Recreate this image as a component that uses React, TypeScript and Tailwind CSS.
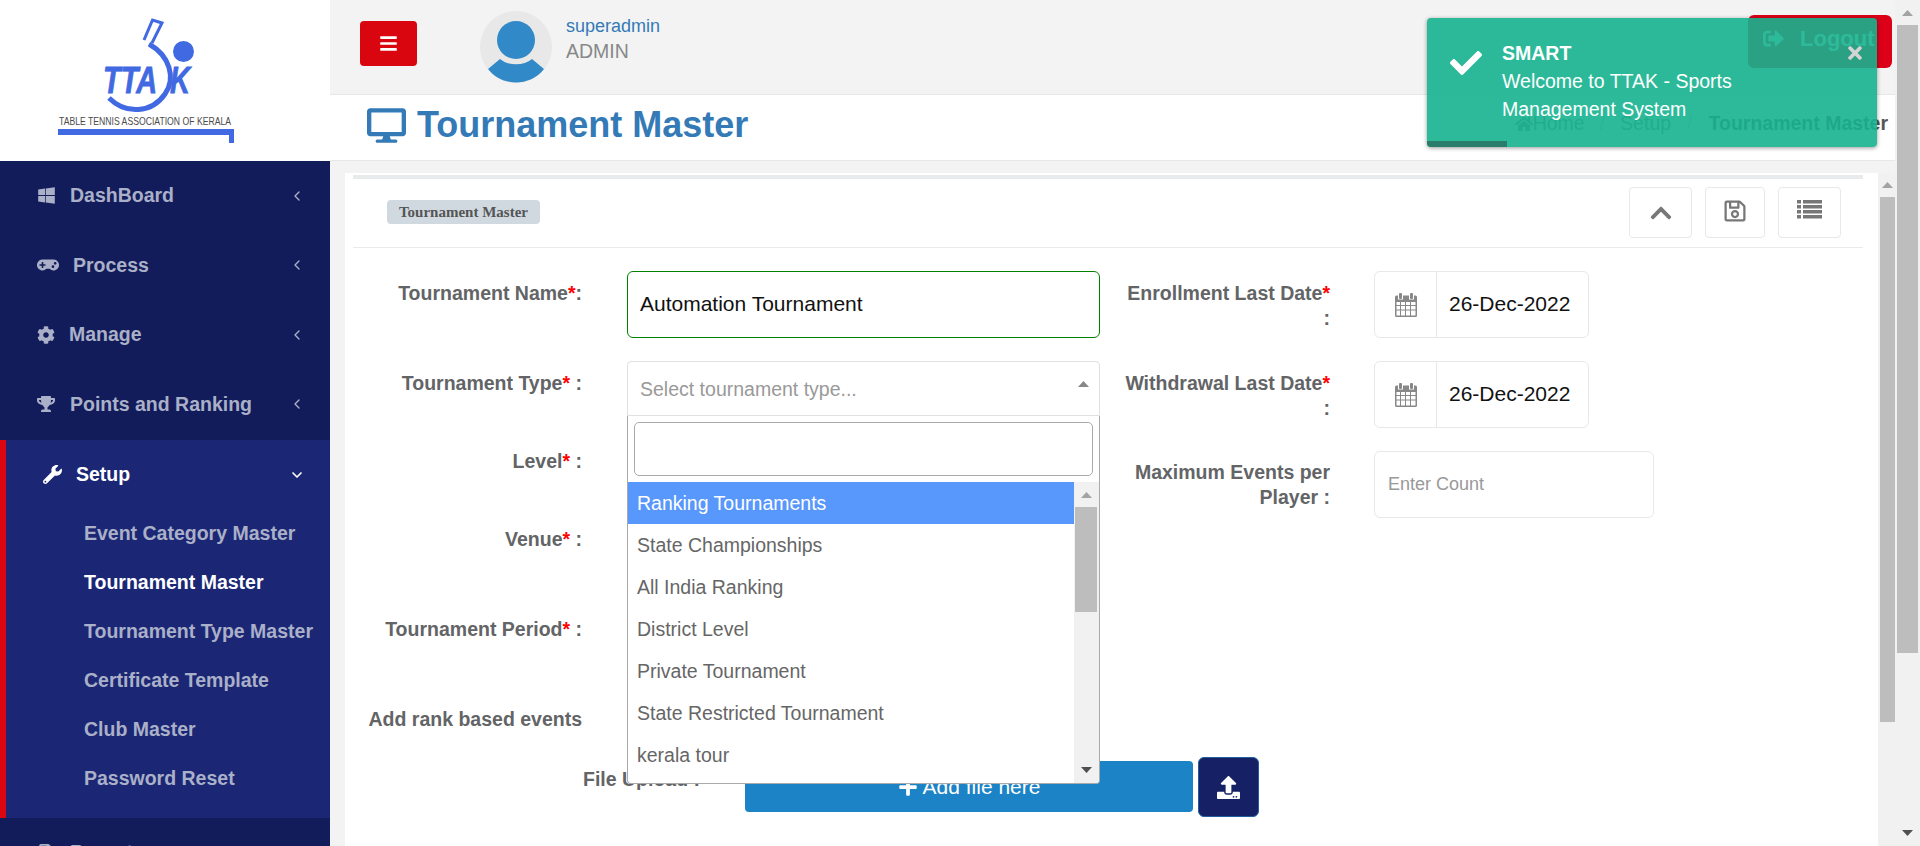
import React from "react";
import { ChevronDown, ChevronLeft } from "lucide-react";
import {
  FaBars,
  FaCheck,
  FaChevronUp,
  FaCog,
  FaDesktop,
  FaGamepad,
  FaHome,
  FaPlus,
  FaRegFileAlt,
  FaRegSave,
  FaSignOutAlt,
  FaTimes,
  FaTrophy,
  FaUpload,
  FaWindows,
  FaWrench,
} from "react-icons/fa";

const font = { fontFamily: '"Liberation Sans", Arial, sans-serif' };

const Logo = () => (
  <svg width="330" height="161" viewBox="0 0 330 161">
    <path d="M144 40 L152.5 20 L162 23 L152 43" fill="none" stroke="#4169e1" strokeWidth="3" />
    <path d="M149 44 C170 56 176 78 165 94 C152 113 126 115 109 98" fill="none" stroke="#4169e1" strokeWidth="5" />
    <circle cx="183.5" cy="51.5" r="10.5" fill="#4169e1" />
    <text x="103" y="93" fontSize="36" fontWeight="700" fontStyle="italic" fill="#4169e1" stroke="#4169e1" strokeWidth="0.8" textLength="54" lengthAdjust="spacingAndGlyphs" fontFamily="Liberation Sans">TTA</text>
    <text x="170" y="93" fontSize="36" fontWeight="700" fontStyle="italic" fill="#4169e1" stroke="#4169e1" strokeWidth="0.8" textLength="20" lengthAdjust="spacingAndGlyphs" fontFamily="Liberation Sans">K</text>
    <text x="59" y="125" fontSize="11" fill="#4a4a4a" textLength="172" lengthAdjust="spacingAndGlyphs" fontFamily="Liberation Sans">TABLE TENNIS ASSOCIATION OF KERALA</text>
    <path d="M58 129 H234 V143 H229 V135 H58 Z" fill="#4169e1" />
  </svg>
);

const MenuItem = ({ icon, label, iconBox = "w-[33px]" }: { icon: React.ReactNode; label: string; iconBox?: string }) => (
  <div className="h-[69.5px] flex items-center pl-[37px] pr-[25px] text-[#aab0c8] text-[19.5px] font-bold">
    <span className={`${iconBox} flex items-center`}>{icon}</span>
    <span>{label}</span>
    <ChevronLeft size={16} strokeWidth={2} className="ml-auto" />
  </div>
);

const subItems = ["Event Category Master", "Tournament Master", "Tournament Type Master", "Certificate Template", "Club Master", "Password Reset"];

const Sidebar = () => (
  <div className="w-[330px] shrink-0 flex flex-col h-full overflow-hidden">
    <div className="h-[161px] bg-white shrink-0">
      <Logo />
    </div>
    <div className="flex-1 bg-[#131c5a]">
      <MenuItem icon={<FaWindows className="text-[19px]" />} label="DashBoard" />
      <MenuItem icon={<FaGamepad className="text-[22px]" />} label="Process" iconBox="w-[36px]" />
      <MenuItem icon={<FaCog className="text-[18px]" />} label="Manage" iconBox="w-[32px]" />
      <MenuItem icon={<FaTrophy className="text-[18px]" />} label="Points and Ranking" />
      <div className="mt-[1px] h-[378px] bg-[#1b2775] border-l-[6px] border-[#dc0610]">
        <div className="h-[69.5px] flex items-center pl-[37px] pr-[25px] text-white text-[19.5px] font-bold">
          <FaWrench className="text-[19px] w-[33px] pr-[14px]" />
          <span>Setup</span>
          <ChevronDown size={16} strokeWidth={2.5} className="ml-auto" />
        </div>
        {subItems.map((s) => (
          <div key={s} className={`h-[49px] flex items-center pl-[78px] text-[19.5px] font-bold ${s === "Tournament Master" ? "text-white" : "text-[#aab0c8]"}`}>
            {s}
          </div>
        ))}
      </div>
      <div className="h-[69px] flex items-center pl-[37px] text-[#aab0c8] text-[19.5px] font-bold">
        <FaRegFileAlt className="text-[18px] w-[33px] pr-[15px]" />
        <span>Reports</span>
      </div>
    </div>
  </div>
);

const Avatar = () => (
  <svg width="72" height="72" viewBox="0 0 72 72" className="shrink-0">
    <circle cx="36" cy="36" r="36" fill="#e8e8e8" />
    <circle cx="36" cy="29" r="19" fill="#3289c8" />
    <path d="M8 58 L20 48 C28 55 44 55 52 48 L64 58 C50 76 22 76 8 58 Z" fill="#3289c8" />
  </svg>
);

const Header = () => (
  <div className="h-[95px] shrink-0 bg-[#f3f3f3] border-b border-[#e6e7e8] flex items-start pt-[11px] pr-[3px]">
    <button className="w-[57px] h-[45px] mt-[10px] ml-[30px] rounded bg-[#d9060f] text-white flex items-center justify-center">
      <FaBars className="text-[19px]" />
    </button>
    <div className="ml-[63px]">
      <Avatar />
    </div>
    <div className="ml-[14px] mt-[3px]">
      <div className="text-[18px] leading-[24px] text-[#337ab7]">superadmin</div>
      <div className="text-[19.5px] leading-[27px] text-[#888]">ADMIN</div>
    </div>
    <button className="ml-auto mt-[4px] w-[144px] h-[53px] rounded-md bg-[#dc0019] text-white text-[22px] font-bold flex items-center pl-[15px] gap-[16px] pb-[6px]">
      <FaSignOutAlt className="text-[21px]" />
      Logout
    </button>
  </div>
);

const TitleBar = () => (
  <div className="h-[66px] shrink-0 bg-white border-b border-[#e6e8ec] flex items-center pl-[37px] pr-[7px]">
    <FaDesktop className="text-[39px] text-[#337ab7] -mt-[5px]" />
    <h1 className="ml-[11px] text-[36px] font-bold text-[#337ab7] -mt-[5px]">Tournament Master</h1>
    <div className="ml-auto flex items-center text-[19.5px] text-[#777] -mt-[7px]">
      <FaHome className="text-[18px]" />
      <span>Home</span>
      <span className="mx-[15px] text-[#ccc]">/</span>
      <span>Setup</span>
      <span className="mx-[16px] text-[#ccc]">/</span>
      <span className="font-bold text-[#555]">Tournament Master</span>
    </div>
  </div>
);

const Arrow = ({ up, color = "#a3a3a3" }: { up?: boolean; color?: string }) => (
  <svg width="11" height="6" viewBox="0 0 11 6">
    <path d={up ? "M5.5 0 L11 6 H0 Z" : "M0 0 H11 L5.5 6 Z"} fill={color} />
  </svg>
);

const Req = () => <span className="text-[#f00]">*</span>;

const Label = ({ children, className = "" }: { children: React.ReactNode; className?: string }) => (
  <div className={`shrink-0 text-right text-[19.5px] leading-[25px] font-bold text-[#626466] ${className}`}>{children}</div>
);

const CalendarIcon = () => (
  <svg width="22" height="24" viewBox="0 0 22 24" fill="#888">
    <rect x="4" y="0" width="3" height="6" rx="1" />
    <rect x="15" y="0" width="3" height="6" rx="1" />
    <path d="M1.5 2.5 H3 V6.5 H8 V2.5 H14 V6.5 H19 V2.5 H20.5 A1.5 1.5 0 0 1 22 4 V22.5 A1.5 1.5 0 0 1 20.5 24 H1.5 A1.5 1.5 0 0 1 0 22.5 V4 A1.5 1.5 0 0 1 1.5 2.5 Z M1.5 9 V12 H5 V9 Z M6 9 V12 H10 V9 Z M11 9 V12 H15 V9 Z M16 9 V12 H20.5 V9 Z M1.5 13 V16.5 H5 V13 Z M6 13 V16.5 H10 V13 Z M11 13 V16.5 H15 V13 Z M16 13 V16.5 H20.5 V13 Z M1.5 17.5 V22.5 H5 V17.5 Z M6 17.5 V22.5 H10 V17.5 Z M11 17.5 V22.5 H15 V17.5 Z M16 17.5 V22.5 H20.5 V17.5 Z" fillRule="evenodd" />
  </svg>
);

const ListIcon = () => (
  <svg width="25" height="19" viewBox="0 0 25 19" fill="#777">
    <rect x="0" y="0" width="4" height="3.5" />
    <rect x="6" y="0" width="19" height="3.5" />
    <rect x="0" y="5" width="4" height="3.5" />
    <rect x="6" y="5" width="19" height="3.5" />
    <rect x="0" y="10" width="4" height="3.5" />
    <rect x="6" y="10" width="19" height="3.5" />
    <rect x="0" y="15" width="4" height="3.5" />
    <rect x="6" y="15" width="19" height="3.5" />
  </svg>
);

const DateBox = () => (
  <div className="w-[215px] h-[67px] border border-[#e8e8e8] rounded-md flex items-center">
    <div className="w-[62px] h-full border-r border-[#e8e8e8] flex items-center justify-center">
      <CalendarIcon />
    </div>
    <span className="pl-[12px] pb-[2px] text-[21px] text-[#111]">26-Dec-2022</span>
  </div>
);

const options = ["Ranking Tournaments", "State Championships", "All India Ranking", "District Level", "Private Tournament", "State Restricted Tournament", "kerala tour"];

const Dropdown = () => (
  <div className="absolute -left-px top-[54px] z-10 w-[473px] h-[368px] bg-white border border-t-0 border-[#aaa] rounded-b flex flex-col overflow-hidden">
    <div className="h-[66px] shrink-0 pt-[6px] pl-[6px]">
      <div className="w-[459px] h-[54px] border border-[#aaa] rounded-[5px]" />
    </div>
    <div className="flex flex-1 min-h-0">
      <div className="w-[446px]">
        {options.map((o, i) => (
          <div key={o} className={`h-[42px] flex items-center pl-[9px] pt-[1px] text-[19.5px] ${i === 0 ? "bg-[#5897fb] text-white" : "text-[#666]"}`}>
            {o}
          </div>
        ))}
      </div>
      <div className="flex-1 bg-[#f1f1f1] flex flex-col items-center pr-[1px]">
        <div className="mt-[10px]">
          <Arrow up />
        </div>
        <div className="mt-[9px] w-[22px] h-[105px] bg-[#bdbdbd]" />
        <div className="mt-auto mb-[10px]">
          <Arrow color="#505050" />
        </div>
      </div>
    </div>
  </div>
);

const IconBtn = ({ children, w = "w-[63px]" }: { children: React.ReactNode; w?: string }) => (
  <div className={`${w} h-[51px] border border-[#e8e8e8] rounded flex items-center justify-center text-[#777]`}>{children}</div>
);

const Card = () => (
  <div className="flex-1 bg-white pl-[8px] pr-[15px] pt-[2px] h-full overflow-hidden">
    <div className="h-[4px] bg-[#e8eaec]" />
    <div className="h-[69px] border-b border-[#e8eaec] flex items-start">
      <div className="mt-[21px] ml-[34px] w-[153px] h-[24px] rounded bg-[#d0d9e0] text-center text-[15px] leading-[24px] font-bold text-[#555]" style={{ fontFamily: '"Liberation Serif", serif' }}>
        Tournament Master
      </div>
      <div className="ml-auto mr-[22px] mt-[8px] flex gap-[13px]">
        <IconBtn>
          <FaChevronUp className="text-[24px]" />
        </IconBtn>
        <IconBtn w="w-[60px]">
          <FaRegSave className="text-[24px] -mt-[4px]" />
        </IconBtn>
        <IconBtn>
          <span className="-mt-[6px] flex">
            <ListIcon />
          </span>
        </IconBtn>
      </div>
    </div>
    <div className="flex pt-[23px]">
      <div className="w-[747px] shrink-0">
        <div className="flex h-[90px]">
          <Label className="w-[229px] mt-[10px]">
            Tournament Name<Req />:
          </Label>
          <div className="ml-[45px] w-[473px] h-[67px] shrink-0 border border-[#008000] rounded-md flex items-center pl-[12px] pb-[2px] text-[21px] text-[#111]">Automation Tournament</div>
        </div>
        <div className="flex h-[88px]">
          <Label className="w-[229px] mt-[10px]">
            Tournament Type<Req /> :
          </Label>
          <div className="relative ml-[45px] w-[473px] h-[55px] shrink-0 border border-[#e0e0e0] rounded-t flex items-center pl-[12px] pr-[10px] text-[19.5px] text-[#999]">
            <span className="mt-[2px]">Select tournament type...</span>
            <span className="ml-auto -mt-[10px] flex">
              <Arrow up color="#888" />
            </span>
            <Dropdown />
          </div>
        </div>
        <Label className="w-[229px] h-[78px]">
          Level<Req /> :
        </Label>
        <Label className="w-[229px] h-[90px]">
          Venue<Req /> :
        </Label>
        <Label className="w-[229px] h-[90px]">
          Tournament Period<Req /> :
        </Label>
        <Label className="w-[229px] h-[60px]">Add rank based events</Label>
        <div className="flex items-start">
          <Label className="w-[347px]">File Upload :</Label>
          <button className="ml-[45px] -mt-[6px] w-[448px] h-[51px] shrink-0 rounded bg-[#1c83c6] text-white text-[21px] flex items-center justify-center gap-[5px]">
            <FaPlus className="text-[20px]" />
            Add file here
          </button>
          <button className="ml-[5px] -mt-[10px] w-[61px] h-[60px] shrink-0 rounded-md bg-[#162064] border border-[#1f5f9f] text-white flex items-center justify-center">
            <FaUpload className="text-[23px]" />
          </button>
        </div>
      </div>
      <div>
        <div className="flex h-[90px]">
          <Label className="w-[230px] pl-[20px] mt-[10px]">
            Enrollment Last Date<Req /> :
          </Label>
          <div className="ml-[44px]">
            <DateBox />
          </div>
        </div>
        <div className="flex h-[90px]">
          <Label className="w-[230px] pl-[20px] mt-[10px]">
            Withdrawal Last Date<Req /> :
          </Label>
          <div className="ml-[44px]">
            <DateBox />
          </div>
        </div>
        <div className="flex">
          <Label className="w-[230px] pl-[20px] mt-[9px]">Maximum Events per Player :</Label>
          <div className="ml-[44px] w-[280px] h-[67px] shrink-0 border border-[#e8e8e8] rounded-md flex items-center pl-[13px] text-[18px] text-[#999]">Enter Count</div>
        </div>
      </div>
    </div>
  </div>
);

const Toast = () => (
  <div className="absolute left-[1427px] top-[18px] z-20 w-[450px] h-[129px] rounded bg-[#16b28f]/90 shadow-[0_1px_4px_rgba(0,0,0,0.4)] overflow-hidden text-white text-[19.5px] leading-[28px]">
    <FaCheck className="absolute left-[23px] top-[29px] text-[32px]" />
    <div className="ml-[75px] mt-[22px] w-[290px]">
      <div className="font-bold leading-[27px]">SMART</div>
      <div>Welcome to TTAK - Sports Management System</div>
    </div>
    <FaTimes className="absolute right-[12px] top-[25px] text-[20px] text-[#d4d4d4]" />
    <div className="absolute left-0 bottom-0 h-[6px] w-[80px] bg-[#2a7d6b]" />
  </div>
);

const App = () => {
  return (
    <div className="relative w-[1920px] h-[846px] flex overflow-hidden bg-white" style={font}>
      <Sidebar />
      <div className="flex-1 flex flex-col min-w-0">
        <Header />
        <TitleBar />
        <div className="flex-1 flex min-h-0 bg-[#f3f3f3] pt-[12px] pl-[15px]">
          <Card />
          <div className="w-[17px] shrink-0 bg-[#f1f1f1] flex flex-col items-end">
            <div className="w-[15px] flex justify-center mt-[9px]">
              <Arrow up />
            </div>
            <div className="w-[15px] h-[525px] bg-[#bdbdbd] mt-[9px]" />
          </div>
        </div>
      </div>
      <div className="w-[25px] shrink-0 bg-[#f1f1f1] flex flex-col items-center pr-[1px]">
        <div className="mt-[10px]">
          <Arrow up />
        </div>
        <div className="w-[21px] h-[628px] bg-[#bdbdbd] mt-[9px]" />
        <div className="mt-auto mb-[10px]">
          <Arrow color="#505050" />
        </div>
      </div>
      <Toast />
    </div>
  );
};

export default App;
